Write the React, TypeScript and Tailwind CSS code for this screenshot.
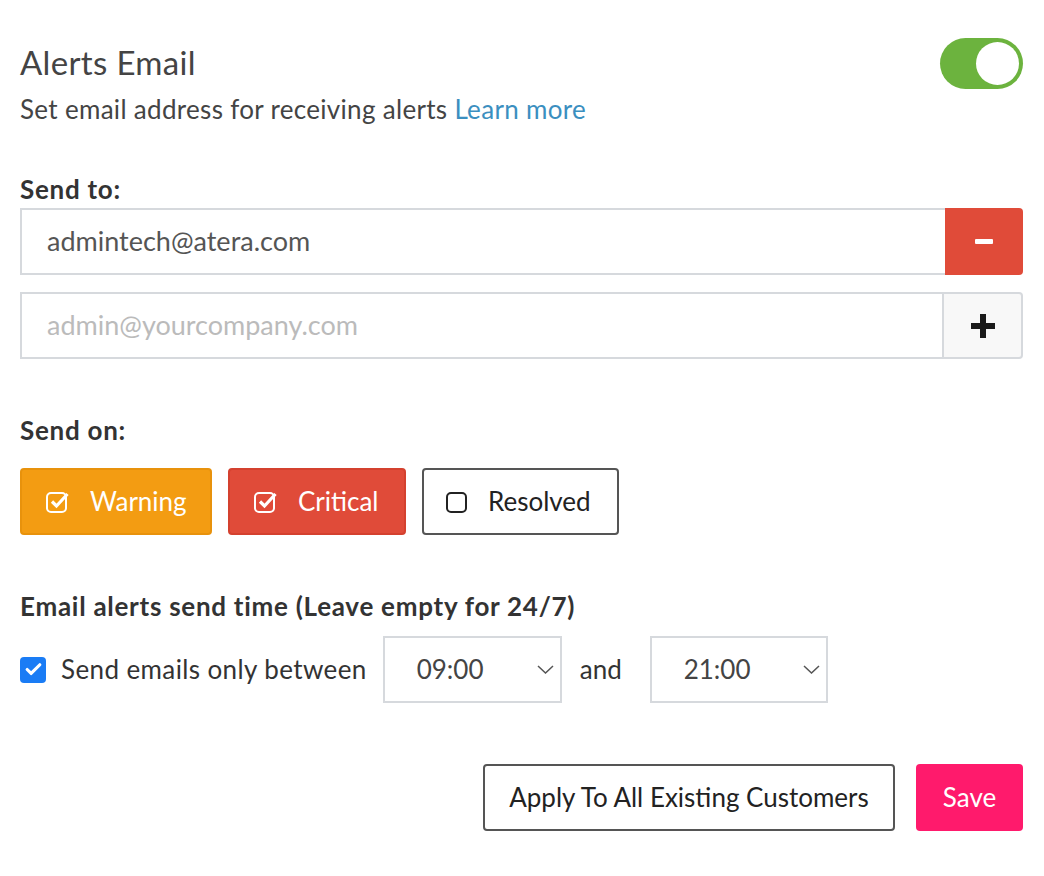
import { Check } from "lucide-react";

function CheckSquare({ checked, color }: { checked: boolean; color: string }) {
  return (
    <svg width="24" height="24" viewBox="0 0 24 24" fill="none" className="shrink-0">
      <rect x="1" y="3" width="19" height="19" rx="4" stroke={color} strokeWidth="2" />
      {checked && (
        <path d="M6 11.5l4.5 4.5L21.5 4" stroke={color} strokeWidth="3.2" fill="none" />
      )}
    </svg>
  );
}

function Chevron() {
  return (
    <svg width="17" height="9" viewBox="0 0 17 9" fill="none" className="shrink-0">
      <path d="M1 1l7.5 7 7.5-7" stroke="#555" strokeWidth="1.5" />
    </svg>
  );
}

export default function App() {
  return (
    <div className="min-h-screen bg-white font-['Lato','Liberation_Sans',sans-serif] text-[#333]">
      <div className="pl-[20px] pr-[21px] pt-[38px]">
        <header className="flex justify-between items-start">
          <div>
            <h1 className="text-[33px] leading-[44px] text-[#444] mt-[2px] tracking-[0.01em]">Alerts Email</h1>
            <p className="text-[26px] leading-[36px] text-[#444] mt-[7px] tracking-[0.012em]">
              Set email address for receiving alerts{" "}
              <a className="text-[#3b8fc0]">Learn more</a>
            </p>
          </div>
          <div className="w-[83px] h-[51px] rounded-full bg-[#6cb33e] flex items-center justify-end pr-[4px]">
            <div className="w-[43px] h-[43px] rounded-full bg-white" />
          </div>
        </header>

        <section className="mt-[45px]">
          <h2 className="text-[26px] leading-[34px] font-bold text-[#333] tracking-[0.028em]">Send to:</h2>
          <div className="mt-[2px] flex h-[67px]">
            <div className="flex-1 border-2 border-r-0 border-[#d6d9dd] flex items-center pl-[25px] text-[27px] text-[#555]">
              admintech@atera.com
            </div>
            <button className="w-[78px] bg-[#e04b39] rounded-r-[4px] flex items-center justify-center">
              <span className="block w-[18px] h-[5px] bg-white rounded-[1px]" />
            </button>
          </div>
          <div className="mt-[17px] flex h-[67px]">
            <div className="flex-1 border-2 border-[#d6d9dd] flex items-center pl-[25px] text-[27px] text-[#bbb]">
              admin@yourcompany.com
            </div>
            <button className="w-[79px] bg-[#f8f8f8] border-2 border-l-0 border-[#d6d9dd] rounded-r-[4px] flex items-center justify-center">
              <svg width="26" height="26" viewBox="0 0 26 26">
                <rect x="10" y="1" width="6" height="24" fill="#1a1a1a" />
                <rect x="1" y="10" width="24" height="6" fill="#1a1a1a" />
              </svg>
            </button>
          </div>
        </section>

        <section className="mt-[54px]">
          <h2 className="text-[26px] leading-[34px] font-bold text-[#333] tracking-[0.028em]">Send on:</h2>
          <div className="mt-[21px] flex gap-[16px]">
            <button className="h-[67px] w-[192px] rounded-[4px] bg-[#f39c12] border-2 border-[#e8920c] text-white text-[26px] flex items-center pl-[24px] gap-[20px]">
              <CheckSquare checked color="#fff" />
              Warning
            </button>
            <button className="h-[67px] w-[178px] rounded-[4px] bg-[#e04b39] border-2 border-[#d4412f] text-white text-[26px] flex items-center pl-[24px] gap-[20px]">
              <CheckSquare checked color="#fff" />
              Critical
            </button>
            <button className="h-[67px] w-[197px] rounded-[4px] bg-white border-2 border-[#555] text-[#222] text-[26px] flex items-center pl-[22px] gap-[18px]">
              <CheckSquare checked={false} color="#222" />
              Resolved
            </button>
          </div>
        </section>

        <section className="mt-[54px]">
          <h2 className="text-[26px] leading-[34px] font-bold text-[#333] tracking-[0.028em]">
            Email alerts send time (Leave empty for 24/7)
          </h2>
          <div className="mt-[13px] flex items-center">
            <span className="w-[26px] h-[26px] rounded-[4px] bg-[#1a7cf5] flex items-center justify-center">
              <Check size={19} strokeWidth={4} color="#fff" />
            </span>
            <span className="ml-[15px] text-[26px] text-[#333] tracking-[0.015em]">Send emails only between</span>
            <div className="ml-[16px] w-[179px] h-[67px] border-2 border-[#d6d9dd] flex items-center justify-between pl-[32px] pr-[6px] text-[26px] text-[#444]">
              09:00
              <Chevron />
            </div>
            <span className="ml-[18px] text-[26px] text-[#333]">and</span>
            <div className="ml-[28px] w-[178px] h-[67px] border-2 border-[#d6d9dd] flex items-center justify-between pl-[32px] pr-[6px] text-[26px] text-[#444]">
              21:00
              <Chevron />
            </div>
          </div>
        </section>

        <footer className="mt-[61px] flex justify-end gap-[21px]">
          <button className="h-[67px] w-[412px] rounded-[4px] border-2 border-[#555] bg-white text-[26px] text-[#222]">
            Apply To All Existing Customers
          </button>
          <button className="h-[67px] w-[107px] rounded-[4px] bg-[#ff1a6c] text-[26px] text-white">
            Save
          </button>
        </footer>
      </div>
    </div>
  );
}
